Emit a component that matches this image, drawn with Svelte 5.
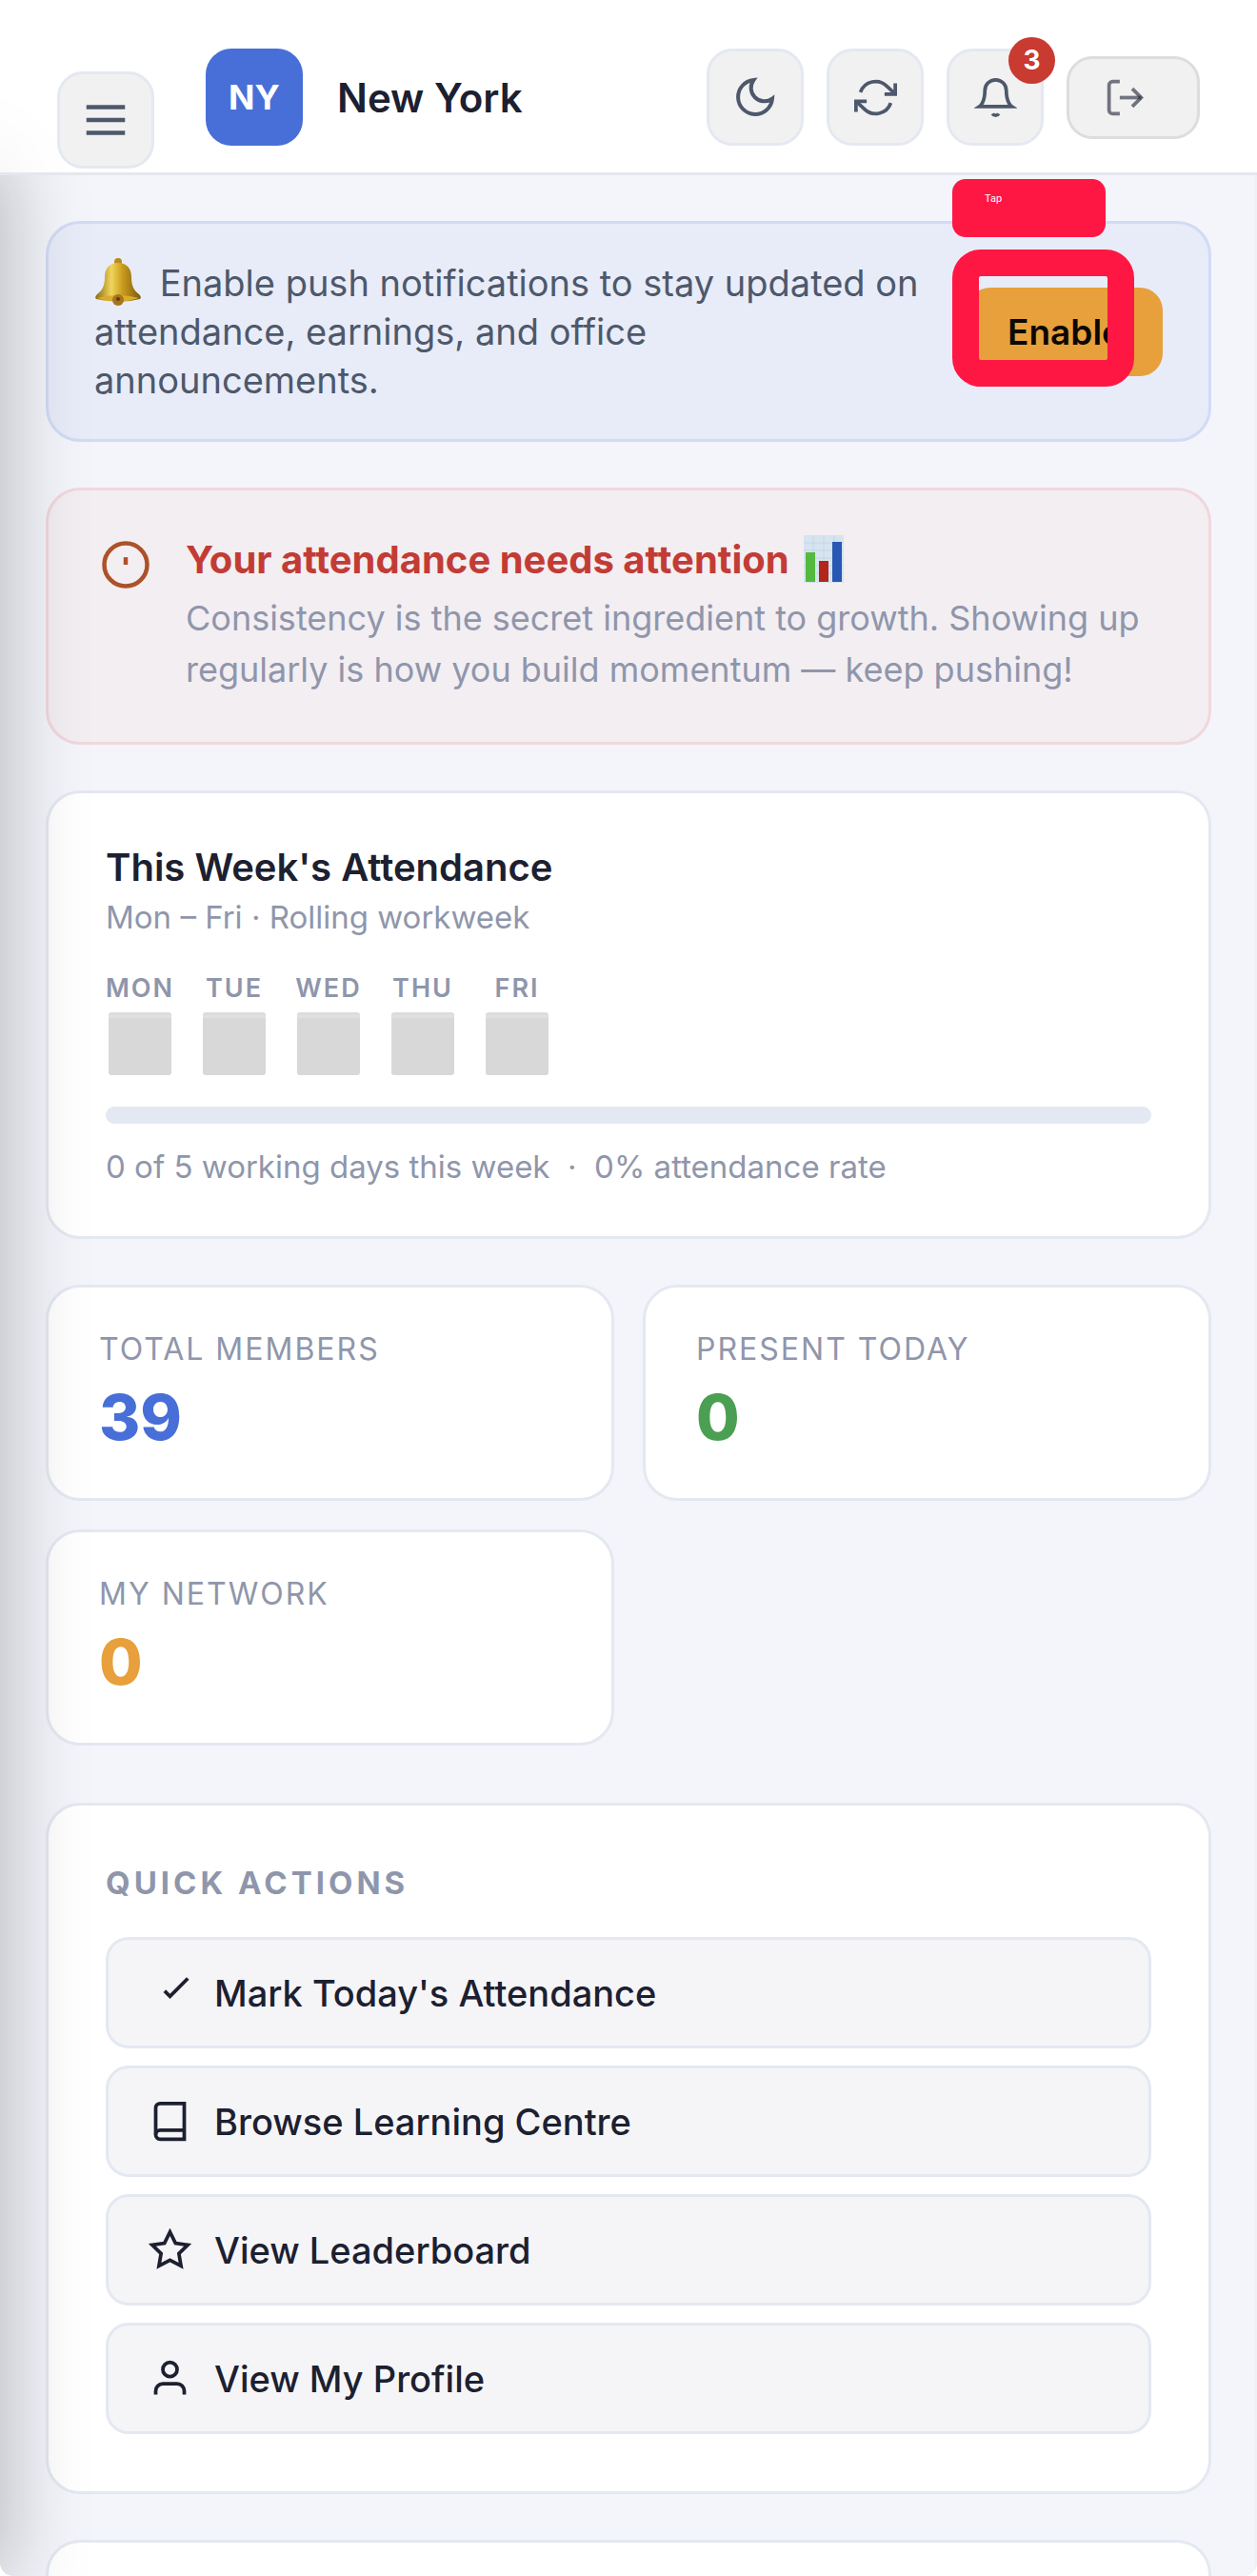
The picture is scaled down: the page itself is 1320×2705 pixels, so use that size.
<script>
  let dark = false;
  let notifications = 3;
  let pushEnabled = false;

  const daysPresent = 0;
  const week = ["Mon", "Tue", "Wed", "Thu", "Fri"];

  const stats = [
    { label: "Total Members", value: 39, tone: "blue" },
    { label: "Present Today", value: 0, tone: "green" },
    { label: "My Network", value: 0, tone: "amber" },
  ];

  const actions = [
    { icon: "check", label: "Mark Today's Attendance" },
    { icon: "book", label: "Browse Learning Centre" },
    { icon: "star", label: "View Leaderboard" },
    { icon: "user", label: "View My Profile" },
  ];

  $: rate = Math.round((daysPresent / week.length) * 100);
</script>

<div class="page">
  <div class="drawer-edge"></div>

  <header>
    <button class="icon-btn menu" aria-label="Open menu">
      <svg class="icon lg" viewBox="0 0 24 24">
        <path d="M3 6h18M3 12h18M3 18h18" />
      </svg>
    </button>
    <div class="avatar">NY</div>
    <div class="office">New York</div>

    <div class="tools">
      <button
        class="icon-btn"
        aria-label="Toggle dark mode"
        on:click={() => (dark = !dark)}
      >
        <svg class="icon md" viewBox="0 0 24 24">
          <path d="M21 12.79A9 9 0 1 1 11.21 3 7 7 0 0 0 21 12.79z" />
        </svg>
      </button>
      <button class="icon-btn" aria-label="Refresh">
        <svg class="icon" viewBox="0 0 24 24">
          <polyline points="23 4 23 10 17 10" />
          <polyline points="1 20 1 14 7 14" />
          <path
            d="M3.51 9a9 9 0 0 1 14.85-3.36L23 10M1 14l4.64 4.36A9 9 0 0 0 20.49 15"
          />
        </svg>
      </button>
      <button class="icon-btn" aria-label="Notifications">
        <svg class="icon" viewBox="0 0 24 24">
          <path d="M18 8A6 6 0 0 0 6 8c0 7-3 9-3 9h18s-3-2-3-9" />
          <path d="M13.73 21a2 2 0 0 1-3.46 0" />
        </svg>
        {#if notifications}
          <span class="badge">{notifications}</span>
        {/if}
      </button>
      <button class="logout" aria-label="Log out">
        <svg class="icon" viewBox="0 0 24 24">
          <path d="M9 21H5a2 2 0 0 1-2-2V5a2 2 0 0 1 2-2h4" />
          <polyline points="16 17 21 12 16 7" />
          <line x1="21" y1="12" x2="9" y2="12" />
        </svg>
      </button>
    </div>
  </header>

  <main>
    <section class="banner">
      <p>
        <svg class="emoji" viewBox="0 0 50 50">
          <defs>
            <linearGradient id="gold">
              <stop offset="0" stop-color="#8f6a10" />
              <stop offset="0.35" stop-color="#f0d55c" />
              <stop offset="0.6" stop-color="#c99b1d" />
              <stop offset="1" stop-color="#7d5a0c" />
            </linearGradient>
          </defs>
          <circle cx="25" cy="4" r="4" fill="#b98b1c" />
          <path
            d="M25 5C15 5 11 12 11 20C11 30 8 34 3 38Q0 41 2 43Q25 49 48 43Q50 41 47 38C42 34 39 30 39 20C39 12 35 5 25 5Z"
            fill="url(#gold)"
          />
          <path d="M3 42Q25 36 47 42Q25 49 3 42Z" fill="#d8ab2b" />
          <circle cx="25" cy="44" r="6" fill="#a8741b" />
          <circle cx="25" cy="43" r="2" fill="#5f3b0b" />
        </svg>
        Enable push notifications to stay updated on attendance, earnings, and
        office announcements.
      </p>
      <div class="enable-wrap">
        <button class="enable" on:click={() => (pushEnabled = true)}>
          Enable
        </button>
        <div class="hint-label">Tap</div>
        <div class="hint-box"></div>
      </div>
    </section>

    <section class="alert">
      <svg class="icon alert-icon" viewBox="0 0 24 24">
        <circle cx="12" cy="12" r="10" />
        <line x1="12" y1="8.5" x2="12" y2="12" />
      </svg>
      <div>
        <h2>
          Your attendance needs attention
          <svg class="chart" viewBox="0 0 42 50">
            <rect width="42" height="50" fill="#d6e4ef" />
            <path
              d="M0 8h42M0 16h42M0 24h42M0 32h42M0 40h42M10 0v50M21 0v50M32 0v50"
              stroke="#c6d6e3"
            />
            <rect x="2" y="18" width="10" height="31" fill="#55b93f" />
            <rect x="16" y="27" width="10" height="22" fill="#b3261c" />
            <rect x="30" y="7" width="10" height="42" fill="#2858b4" />
          </svg>
        </h2>
        <p>
          Consistency is the secret ingredient to growth. Showing up regularly
          is how you build momentum — keep pushing!
        </p>
      </div>
    </section>

    <section class="card week">
      <h2>This Week's Attendance</h2>
      <p class="sub">Mon – Fri · Rolling workweek</p>
      <div class="days">
        {#each week as day}
          <div class="day">
            <span>{day}</span>
            <div class="box"></div>
          </div>
        {/each}
      </div>
      <div class="track">
        <div class="fill" style="width: {rate}%"></div>
      </div>
      <p class="sub">
        {daysPresent} of {week.length} working days this week &nbsp;·&nbsp; {rate}%
        attendance rate
      </p>
    </section>

    <section class="stats">
      {#each stats as s}
        <div class="card stat">
          <div class="stat-label">{s.label}</div>
          <div class="stat-value {s.tone}">{s.value}</div>
        </div>
      {/each}
    </section>

    <section class="card quick">
      <h3>Quick Actions</h3>
      {#each actions as a}
        <button class="action">
          <svg class="icon" viewBox="0 0 24 24">
            {#if a.icon === "check"}
              <polyline points="22 4 12 14.01 9 11.01" />
            {:else if a.icon === "book"}
              <path d="M4 19.5A2.5 2.5 0 0 1 6.5 17H20" />
              <path
                d="M6.5 2H20v20H6.5A2.5 2.5 0 0 1 4 19.5v-15A2.5 2.5 0 0 1 6.5 2z"
              />
            {:else if a.icon === "star"}
              <polygon
                points="12 2 15.09 8.26 22 9.27 17 14.14 18.18 21.02 12 17.77 5.82 21.02 7 14.14 2 9.27 8.91 8.26 12 2"
              />
            {:else}
              <path d="M20 21v-2a4 4 0 0 0-4-4H8a4 4 0 0 0-4 4v2" />
              <circle cx="12" cy="7" r="4" />
            {/if}
          </svg>
          {a.label}
        </button>
      {/each}
    </section>

    <section class="card next"></section>
  </main>
</div>

<style>
  :global(body) {
    margin: 0;
    background: #fff;
  }

  .page {
    position: relative;
    display: flex;
    flex-direction: column;
    min-height: 100vh;
    overflow: hidden;
    border-radius: 0 0 14px 14px;
    background: #fff;
    color: #1c2030;
    font-family: Inter, "Liberation Sans", sans-serif;
  }

  /* shadow that the closed drawer throws over the page */
  .drawer-edge {
    position: absolute;
    top: 170px;
    bottom: 0;
    left: -100px;
    width: 100px;
    z-index: 2;
    box-shadow: 0 0 84px 8px rgba(0, 0, 0, 0.25);
    pointer-events: none;
  }

  h2,
  h3,
  p {
    margin: 0;
  }

  button {
    font-family: inherit;
    cursor: pointer;
  }

  .icon {
    width: 45px;
    height: 45px;
    flex: none;
    fill: none;
    stroke: currentColor;
    stroke-width: 2;
  }

  .icon.md {
    width: 48px;
    height: 48px;
  }

  .icon.lg {
    width: 54px;
    height: 54px;
  }

  header {
    position: relative;
    z-index: 3;
    display: flex;
    align-items: center;
    padding: 51px 60px 28px;
    border-bottom: 3px solid #e4e7ee;
    background: rgba(255, 255, 255, 0.75);
  }

  .icon-btn {
    position: relative;
    box-sizing: border-box;
    display: flex;
    align-items: center;
    justify-content: center;
    width: 102px;
    height: 102px;
    padding: 0;
    border: 3px solid #e4e8f2;
    border-radius: 27px;
    background: #f1f1f2;
    color: #4e586b;
  }

  /* the menu button hangs lower than the rest of the bar */
  .menu {
    align-self: flex-end;
    margin-bottom: -24px;
  }

  .avatar {
    display: flex;
    align-items: center;
    justify-content: center;
    width: 102px;
    height: 102px;
    margin-left: 54px;
    border-radius: 27px;
    background: #486fd8;
    color: #fff;
    font-size: 36px;
    font-weight: 700;
  }

  .office {
    margin-left: 36px;
    font-size: 42px;
    font-weight: 600;
  }

  .tools {
    display: flex;
    align-items: center;
    gap: 24px;
    margin-left: auto;
  }

  .badge {
    position: absolute;
    top: -15px;
    right: -15px;
    width: 49px;
    height: 49px;
    border-radius: 50%;
    background: #c93a31;
    color: #fff;
    font-size: 28px;
    font-weight: 700;
    line-height: 49px;
    text-align: center;
  }

  .logout {
    box-sizing: border-box;
    display: flex;
    align-items: center;
    width: 140px;
    height: 87px;
    padding: 0 36px;
    border: 3px solid #dcdddf;
    border-radius: 27px;
    background: #f1f1f2;
    color: rgba(28, 32, 48, 0.6);
  }

  main {
    flex: 1;
    display: flex;
    flex-direction: column;
    gap: 48px;
    padding: 48px 45px 0 48px;
    border-right: 3px solid #eff1f7;
    background: #f3f5fb;
  }

  .banner {
    display: flex;
    align-items: center;
    justify-content: space-between;
    gap: 36px;
    padding: 36px 48px;
    border: 3px solid #d2dbf5;
    border-radius: 36px;
    background: #e8ecf8;
  }

  .banner p {
    color: #4e586b;
    font-size: 38px;
    line-height: 51px;
  }

  .emoji {
    width: 50px;
    height: 50px;
    margin-right: 8px;
    vertical-align: -10px;
  }

  .enable-wrap {
    position: relative;
    flex: none;
  }

  .enable {
    display: block;
    height: 93px;
    padding: 0 42px;
    border: none;
    border-radius: 24px;
    background: #e7a03c;
    color: #0b0805;
    font-size: 37px;
    font-weight: 600;
  }

  .hint-label,
  .hint-box {
    position: absolute;
    left: -16px;
    box-sizing: border-box;
    pointer-events: none;
  }

  .hint-label {
    top: -114px;
    width: 161px;
    height: 61px;
    padding: 14px 34px;
    border-radius: 14px;
    background: #ff1744;
    color: #fff;
    font-family: Roboto, sans-serif;
    font-size: 11px;
    line-height: 14px;
  }

  .hint-box {
    top: -40px;
    width: 191px;
    height: 144px;
    border: 28px solid #ff1744;
    border-radius: 30px;
  }

  .alert {
    display: flex;
    gap: 36px;
    padding: 43px 54px 49px;
    border: 3px solid #f1d7dc;
    border-radius: 36px;
    background: #f3eef2;
  }

  .alert-icon {
    width: 54px;
    height: 54px;
    margin-top: 8px;
    color: #ad5128;
  }

  .alert h2 {
    margin-bottom: 4px;
    color: #c23c35;
    font-size: 40px;
    font-weight: 700;
    line-height: 60px;
  }

  .alert p {
    color: #8f96ab;
    font-size: 36px;
    line-height: 54px;
  }

  .chart {
    width: 42px;
    height: 50px;
    margin-left: 6px;
    vertical-align: -10px;
  }

  .card {
    border: 3px solid #e4e8f1;
    border-radius: 36px;
    background: #fff;
  }

  .week {
    padding: 51px 60px 47px;
  }

  .week h2 {
    font-size: 40px;
    font-weight: 600;
    line-height: 54px;
  }

  .sub {
    color: #8f96ab;
    font-size: 33px;
    line-height: 51px;
  }

  .days {
    display: flex;
    gap: 27px;
    margin: 32px 0 33px;
  }

  .day {
    width: 72px;
    display: flex;
    flex-direction: column;
    align-items: center;
    gap: 9px;
    color: #8f96ab;
    font-size: 27px;
    font-weight: 600;
    line-height: 33px;
    letter-spacing: 2px;
    text-transform: uppercase;
  }

  .box {
    box-sizing: border-box;
    width: 66px;
    height: 66px;
    border-top: 3px solid #dcdcdc;
    border-radius: 3px;
    background: #d8d8d8;
    box-shadow: inset 0 3px #e0e0e0;
  }

  .track {
    height: 18px;
    margin-bottom: 20px;
    border-radius: 9px;
    background: #e3e8f2;
  }

  .fill {
    height: 100%;
    border-radius: 9px;
    background: #486fd8;
  }

  .stats {
    display: grid;
    grid-template-columns: 1fr 1fr;
    gap: 30px;
    margin-bottom: 12px;
  }

  .stat {
    padding: 39px 53px;
  }

  .stat-label {
    color: #8f96ab;
    font-size: 32px;
    line-height: 51px;
    letter-spacing: 2px;
    text-transform: uppercase;
  }

  .stat-value {
    font-size: 66px;
    font-weight: 800;
    line-height: 92px;
  }

  .blue {
    color: #486fd8;
  }

  .green {
    color: #4b9f52;
  }

  .amber {
    color: #e7a03c;
  }

  .quick {
    display: flex;
    flex-direction: column;
    gap: 18px;
    padding: 57px 60px 60px;
  }

  .quick h3 {
    margin-bottom: 15px;
    color: #8f96ab;
    font-size: 33px;
    font-weight: 700;
    line-height: 48px;
    letter-spacing: 4px;
    text-transform: uppercase;
  }

  .action {
    box-sizing: border-box;
    display: flex;
    align-items: center;
    gap: 24px;
    height: 117px;
    padding: 0 42px;
    border: 3px solid #e4e8f1;
    border-radius: 24px;
    background: #f5f5f8;
    color: #1c2030;
    font-size: 38px;
    font-weight: 500;
    text-align: left;
  }

  .next {
    flex: 1;
    min-height: 33px;
    border-bottom: none;
    border-radius: 36px 36px 0 0;
  }
</style>
